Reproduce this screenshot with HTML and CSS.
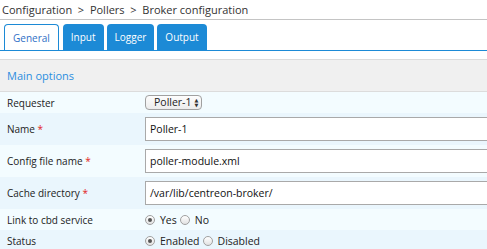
FILE: index.html
```html
<!DOCTYPE html>
<html>
<head>
    <link rel="stylesheet" href="styles.css">
</head>
<body>
    <!-- Breadcrumb -->
    <div class="breadcrumb">Configuration &nbsp;&gt;&nbsp; Pollers &nbsp;&gt;&nbsp; Broker configuration</div>

    <!-- Tabs -->
    <div class="tabs">
        <div class="tab active">General</div>
        <div class="tab">Input</div>
        <div class="tab">Logger</div>
        <div class="tab">Output</div>
    </div>

    <!-- Form -->
    <div class="form">
        <div class="section-title">Main options</div>
        <div class="row light">
            <div class="label">Requester</div>
            <div class="value">
                <span class="select">Poller-1 <span class="arrows">&#9650;<br>&#9660;</span></span>
            </div>
        </div>
        <div class="row dark tall">
            <div class="label">Name <span class="req">*</span></div>
            <div class="value"><div class="input">Poller-1</div></div>
        </div>
        <div class="row light tall">
            <div class="label">Config file name <span class="req">*</span></div>
            <div class="value"><div class="input">poller-module.xml</div></div>
        </div>
        <div class="row dark tall">
            <div class="label">Cache directory <span class="req">*</span></div>
            <div class="value"><div class="input">/var/lib/centreon-broker/</div></div>
        </div>
        <div class="row light">
            <div class="label">Link to cbd service</div>
            <div class="value">
                <label class="option"><span class="radio checked"></span>Yes</label>
                <label class="option"><span class="radio"></span>No</label>
            </div>
        </div>
        <div class="row dark">
            <div class="label">Status</div>
            <div class="value">
                <label class="option"><span class="radio checked"></span>Enabled</label>
                <label class="option"><span class="radio"></span>Disabled</label>
            </div>
        </div>
    </div>
</body>
</html>
```

FILE: styles.css
```css
body {
    margin: 0;
    font-family: 'Open Sans', 'DejaVu Sans', sans-serif;
    font-size: 11px;
    color: #222;
    background: #fff;
    overflow: hidden;
}
.breadcrumb {
    padding: 2px 0 0 2px;
    height: 17px;
    line-height: 16px;
    color: #333;
    border-bottom: 1px solid #c4c4c4;
}
/* Tabs */
.tabs {
    display: flex;
    gap: 3px;
    padding: 4px 0 0 4px;
    border-bottom: 1px solid #1c8ad6;
}
.tab {
    height: 26px;
    line-height: 27px;
    padding: 0 8px;
    background: #1c8ad6;
    color: #fff;
    border-radius: 4px 4px 0 0;
    font-size: 10px;
}
.tab.active {
    background: #fff;
    color: #2f6fc6;
    border: 1px solid #1c8ad6;
    border-bottom: none;
    height: 25px;
    margin-bottom: -1px;
    margin-right: 1px;
    padding: 0 8px;
}
/* Form */
.form {
    margin-top: 8px;
}
.section-title {
    height: 31px;
    line-height: 31px;
    padding-left: 7px;
    background: #f0f0f0;
    border-top: 1px solid #dcdcdc;
    border-bottom: 1px solid #dcdcdc;
    color: #2b8ee0;
    font-size: 11px;
}
.row {
    display: flex;
    align-items: center;
    height: 21px;
    font-size: 10px;
}
.row.tall {
    height: 32px;
}
.row.light {
    background: #f3fcff;
}
.row.dark {
    background: #eaf6fd;
}
.label {
    width: 138px;
    padding-left: 7px;
    box-sizing: border-box;
}
.req {
    color: #e2231a;
}
.value {
    flex: 1;
    padding-left: 7px;
    display: flex;
    align-items: center;
}
.input {
    flex: 1;
    height: 24px;
    line-height: 22px;
    box-sizing: border-box;
    border: 1px solid #a9a9a9;
    border-right: none;
    background: #fff;
    padding-left: 4px;
    font-size: 10.5px;
    color: #111;
}
.select {
    display: inline-flex;
    align-items: center;
    height: 13px;
    line-height: 13px;
    padding: 0 3px 0 8px;
    border: 1px solid #a0a0a0;
    border-radius: 4px;
    background: linear-gradient(#fdfdfd, #ececec);
    font-size: 10.5px;
}
.arrows {
    display: inline-block;
    font-size: 5px;
    line-height: 5px;
    margin-left: 3px;
    color: #333;
}
.option {
    display: flex;
    align-items: center;
    margin-right: 3px;
    font-size: 10.5px;
}
.radio {
    display: inline-block;
    width: 8px;
    height: 8px;
    border: 1px solid #a0a0a0;
    border-radius: 50%;
    background: linear-gradient(#fff, #e2e2e2);
    margin-right: 5px;
    position: relative;
}
.radio.checked::after {
    content: '';
    position: absolute;
    left: 2px;
    top: 2px;
    width: 4px;
    height: 4px;
    border-radius: 50%;
    background: #555;
}
```
